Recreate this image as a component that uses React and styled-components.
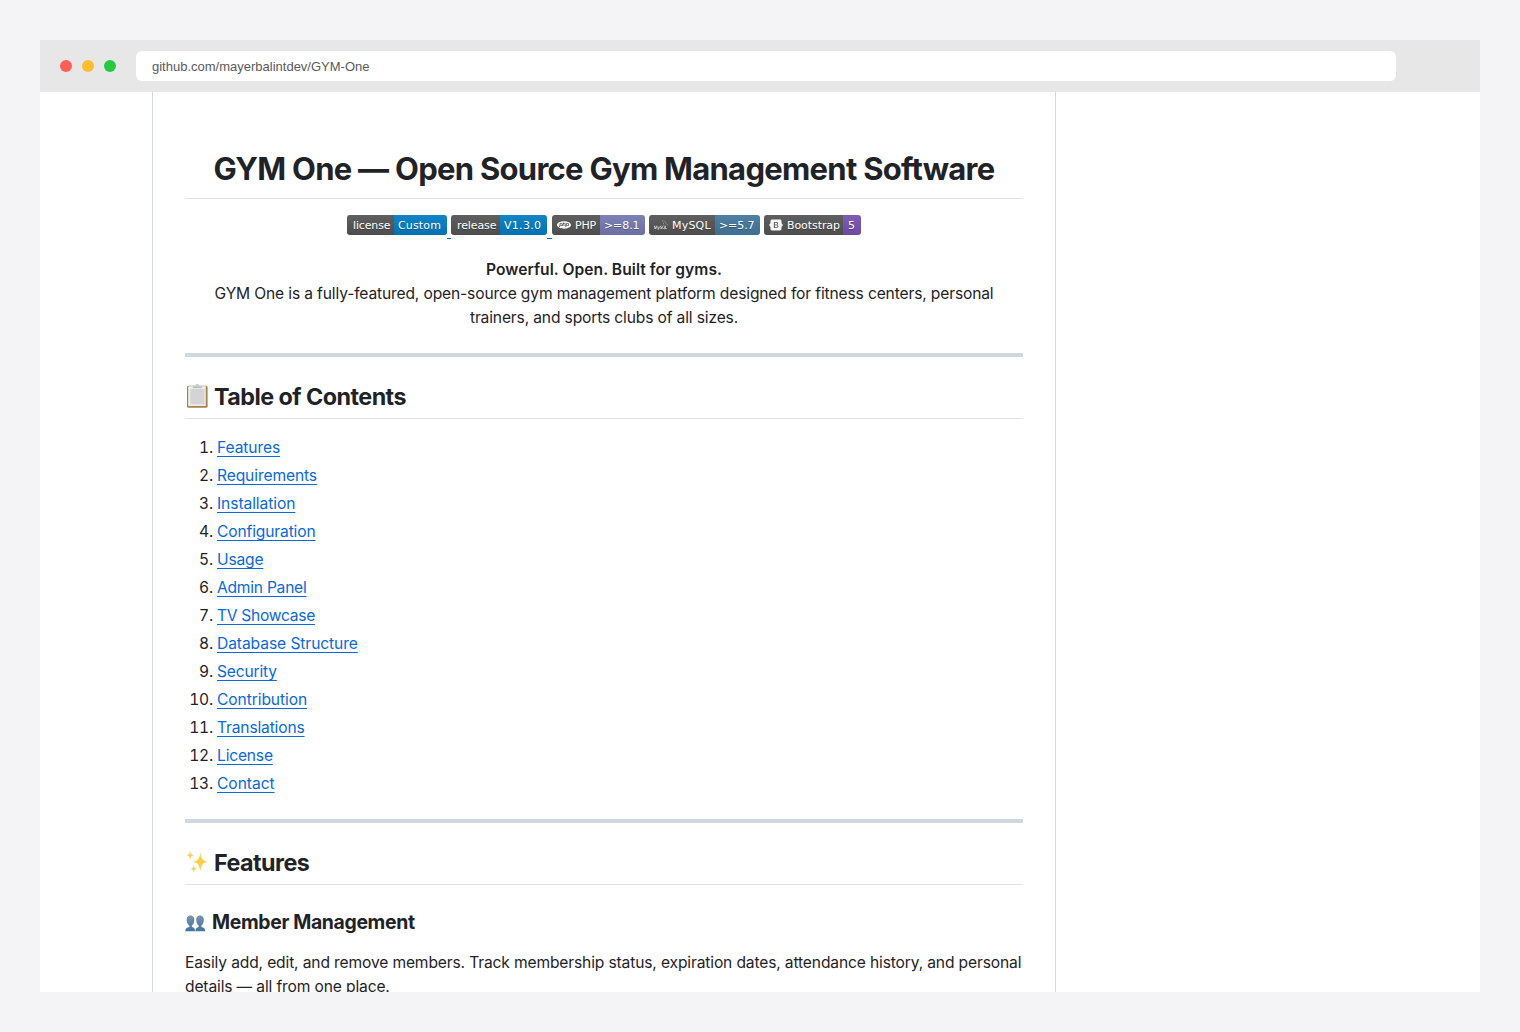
import React from "react";
import styled, { createGlobalStyle } from "styled-components";
import { SiPhp, SiMysql, SiBootstrap } from "react-icons/si";

const GlobalStyle = createGlobalStyle`
  * {
    box-sizing: border-box;
  }

  body {
    margin: 0;
    background: #f4f4f6;
    color: #1f2328;
    font-family: Inter, "Liberation Sans", sans-serif;
    font-size: 15.6px;
    line-height: 24px;
  }
`;

const Page = styled.div`
  width: 1520px;
  height: 1032px;
  padding: 40px;
  overflow: hidden;
`;

const Window = styled.div`
  display: flex;
  flex-direction: column;
  height: 952px;
  background: #ffffff;
  overflow: hidden;
`;

const TitleBar = styled.div`
  display: flex;
  align-items: center;
  flex: none;
  height: 52px;
  padding-left: 20px;
  background: #e7e7e7;
`;

const Lights = styled.div`
  display: flex;
  gap: 10px;
  margin-right: 20px;
`;

const Light = styled.span`
  width: 12px;
  height: 12px;
  border-radius: 50%;
  background: ${(props) => props.$color};
`;

const AddressBar = styled.div`
  width: 1260px;
  height: 30px;
  padding-left: 16px;
  border-radius: 6px;
  background: #ffffff;
  color: #5a5a5a;
  font-family: "Liberation Sans", Arial, sans-serif;
  font-size: 13px;
  line-height: 31px;
`;

const Readme = styled.article`
  width: 904px;
  height: 900px;
  margin-left: 112px;
  padding: 57px 32px 0;
  border: solid #d5dae0;
  border-width: 0 1px;
  overflow: hidden;
`;

const Title = styled.h1`
  margin: 0 0 16px;
  height: 50px;
  border-bottom: 1px solid #dfe2e6;
  font-size: 31px;
  font-weight: 650;
  line-height: 40px;
  letter-spacing: -0.72px;
  text-align: center;
  white-space: nowrap;
`;

const Badges = styled.div`
  display: flex;
  justify-content: center;
  height: 43px;
`;

const BadgeGap = styled.span`
  flex: none;
  width: ${(props) => props.$width}px;
  height: 24px;
  border-bottom: ${(props) => (props.$linked ? "1px solid #0969da" : "0")};
`;

const Badge = styled.span`
  display: flex;
  flex: none;
  height: 20px;
  border-radius: 3px;
  overflow: hidden;
  color: #ffffff;
  font-family: "DejaVu Sans", Verdana, sans-serif;
  font-size: 11px;
  line-height: 21px;
  text-shadow: 0 1px 0 rgba(1, 1, 1, 0.3);
  white-space: nowrap;
`;

const BadgePart = styled.span`
  display: flex;
  gap: 4px;
  width: ${(props) => props.$width}px;
  padding-left: ${(props) => props.$pad}px;
  background: linear-gradient(rgba(187, 187, 187, 0.1), rgba(0, 0, 0, 0.1)),
    ${(props) => props.$color};
  letter-spacing: ${(props) => props.$track || 0}px;

  svg {
    flex: none;
    width: 14px;
    height: 14px;
    margin-top: 3px;
    color: whitesmoke;
  }
`;

const Intro = styled.p`
  margin: 0;
  text-align: center;
  letter-spacing: -0.147px;
  white-space: nowrap;

  strong {
    font-weight: 600;
    letter-spacing: 0.05px;
  }
`;

const Rule = styled.hr`
  height: 4px;
  margin: 23px 0 24px;
  border: 0;
  background: #d1d9e0;
`;

const SectionTitle = styled.h2`
  display: flex;
  gap: 5px;
  height: 38px;
  margin: 0 0 17px;
  border-bottom: 1px solid #dfe2e6;
  font-size: 23.3px;
  font-weight: 650;
  line-height: 32px;
  letter-spacing: -0.53px;
`;

const SubTitle = styled.h3`
  display: flex;
  gap: 6px;
  margin: 0 0 16px;
  padding-top: 8px;
  font-size: 19.4px;
  font-weight: 650;
  line-height: 25px;
  letter-spacing: -0.34px;
`;

const Contents = styled.ol`
  display: flex;
  flex-direction: column;
  gap: 4px;
  margin: 0;
  padding: 0;
  list-style: none;
`;

const ContentsItem = styled.li`
  display: flex;
  gap: 4px;
`;

const Marker = styled.span`
  width: 28px;
  text-align: right;
  font-variant-numeric: tabular-nums;
  letter-spacing: -0.2px;
`;

const Link = styled.a`
  color: #0969da;
  letter-spacing: ${(props) => props.$track}px;
  text-decoration: underline;
  text-decoration-thickness: 1px;
  text-decoration-skip-ink: none;
  text-underline-offset: 3px;
`;

const Text = styled.p`
  margin: 0;
  letter-spacing: -0.142px;
  white-space: nowrap;
`;

const ClipboardIcon = () => (
  <svg width="24" height="30" viewBox="0 0 24 30">
    <rect x="2" y="4.8" width="20.6" height="22" rx="1.6" fill="#a9824b" />
    <rect x="3.8" y="5.8" width="17" height="19.2" fill="#e9eaec" />
    <rect x="5.3" y="8" width="14" height="15.2" fill="#d3d4d6" />
    <path d="M3.8 25V5.800h17" fill="none" stroke="#f7f7f7" strokeWidth="1" />
    <path d="M7.800 6.600V4.700h2.500c0-2.300 4-2.300 4 0h2.600v1.900z" fill="#c3cfce" />
    <path d="M8 6.600h8.700" stroke="#98a29f" strokeWidth="0.6" />
  </svg>
);

const SparklesIcon = () => (
  <svg width="24" height="30" viewBox="0 0 24 30">
    <path d="M15.300 5.200c.8 6.300 2.200 8.600 7.600 9.600-5.400 1-6.800 3.400-7.600 9.700-.8-6.300-2.200-8.700-7.600-9.700 5.400-1 6.800-3.300 7.600-9.600z" fill="#fdcf49" />
    <path d="M5.200 3.800c.4 3 1.200 4 3.900 4.500-2.700.5-3.500 1.600-3.900 4.600-.4-3-1.200-4.100-3.900-4.600 2.700-.5 3.500-1.500 3.900-4.500z" fill="#fbcf5c" />
    <path d="M8.700 17.400c.3 2.900 1 3.900 3.500 4.400-2.500.5-3.200 1.500-3.500 4.400-.3-2.900-1-3.900-3.500-4.400 2.500-.5 3.200-1.500 3.500-4.400z" fill="#fbcf5c" />
  </svg>
);

const MembersIcon = () => (
  <svg width="21" height="25" viewBox="0.5 0 21 25">
    <defs>
      <linearGradient id="bust" x1="0" y1="0" x2="0" y2="1">
        <stop offset="0" stopColor="#7794ae" />
        <stop offset="1" stopColor="#44749f" />
      </linearGradient>
    </defs>
    <path d="M.8 21.200c-.1-2.500.9-3.500 3.300-4 .8-.2 1-.6.8-1.600C3.500 14.500 2.600 13.200 2.300 11.600 1.700 7.800 3.200 5.600 6 5.600s4.300 2.200 3.700 6c-.3 1.600-1 2.900-2.300 4-.2 1 0 1.400.8 1.600 1.600.4 2.400 1.500 2.400 4z" fill="url(#bust)" />
    <path d="M10.900 21.200c0-2.500.7-3.600 2.500-4 .8-.2 1-.6.8-1.600-1.300-1.100-2-2.400-2.300-4-.6-3.800.8-6 3.600-6s4.300 2.200 3.700 6c-.3 1.600-1 2.900-2.300 4-.2 1 0 1.400.8 1.600 2.200.5 3 1.500 3 4z" fill="url(#bust)" />
  </svg>
);

const links = [
  { label: "Features", track: -0.1 },
  { label: "Requirements", track: -0.11 },
  { label: "Installation", track: -0.08 },
  { label: "Configuration", track: -0.14 },
  { label: "Usage", track: -0.18 },
  { label: "Admin Panel", track: -0.24 },
  { label: "TV Showcase", track: -0.29 },
  { label: "Database Structure", track: -0.08 },
  { label: "Security", track: -0.18 },
  { label: "Contribution", track: -0.09 },
  { label: "Translations", track: -0.16 },
  { label: "License", track: -0.19 },
  { label: "Contact", track: -0.05 },
];

const App = () => {
  return (
    <Page>
      <GlobalStyle />
      <Window>
        <TitleBar>
          <Lights>
            <Light $color="#ff5f57" />
            <Light $color="#febc2e" />
            <Light $color="#28c840" />
          </Lights>
          <AddressBar>github.com/mayerbalintdev/GYM-One</AddressBar>
        </TitleBar>
        <Readme>
          <Title>GYM One — Open Source Gym Management Software</Title>
          <Badges>
            <Badge>
              <BadgePart $width={47} $pad={6} $track={-0.15} $color="#555">license</BadgePart>
              <BadgePart $width={53} $pad={4} $track={0.15} $color="#007ec6">Custom</BadgePart>
            </Badge>
            <BadgeGap $width={4} $linked />
            <Badge>
              <BadgePart $width={49} $pad={6} $track={-0.1} $color="#555">release</BadgePart>
              <BadgePart $width={47} $pad={4} $track={0.3} $color="#007ec6">V1.3.0</BadgePart>
            </Badge>
            <BadgeGap $width={5} $linked />
            <Badge>
              <BadgePart $width={48} $pad={5} $track={-0.15} $color="#555"><SiPhp />PHP</BadgePart>
              <BadgePart $width={45} $pad={4} $track={-0.1} $color="#777bb4">&gt;=8.1</BadgePart>
            </Badge>
            <BadgeGap $width={4} />
            <Badge>
              <BadgePart $width={66} $pad={5} $track={0.2} $color="#555"><SiMysql />MySQL</BadgePart>
              <BadgePart $width={45} $pad={4} $track={-0.1} $color="#4479a1">&gt;=5.7</BadgePart>
            </Badge>
            <BadgeGap $width={4} />
            <Badge>
              <BadgePart $width={79} $pad={5} $track={-0.08} $color="#555"><SiBootstrap />Bootstrap</BadgePart>
              <BadgePart $width={18} $pad={5} $color="#7952b3">5</BadgePart>
            </Badge>
          </Badges>
          <Intro>
            <strong>Powerful. Open. Built for gyms.</strong>
            <br />
            GYM One is a fully-featured, open-source gym management platform designed for fitness centers, personal
            <br />
            trainers, and sports clubs of all sizes.
          </Intro>
          <Rule />
          <SectionTitle><ClipboardIcon />Table of Contents</SectionTitle>
          <Contents>
            {links.map((link, i) => (
              <ContentsItem key={link.label}>
                <Marker>{i + 1}.</Marker>
                <Link $track={link.track}>{link.label}</Link>
              </ContentsItem>
            ))}
          </Contents>
          <Rule />
          <SectionTitle><SparklesIcon />Features</SectionTitle>
          <SubTitle><MembersIcon />Member Management</SubTitle>
          <Text>
            Easily add, edit, and remove members. Track membership status, expiration dates, attendance history, and personal
            <br />
            details — all from one place.
          </Text>
        </Readme>
      </Window>
    </Page>
  );
};

export default App;
